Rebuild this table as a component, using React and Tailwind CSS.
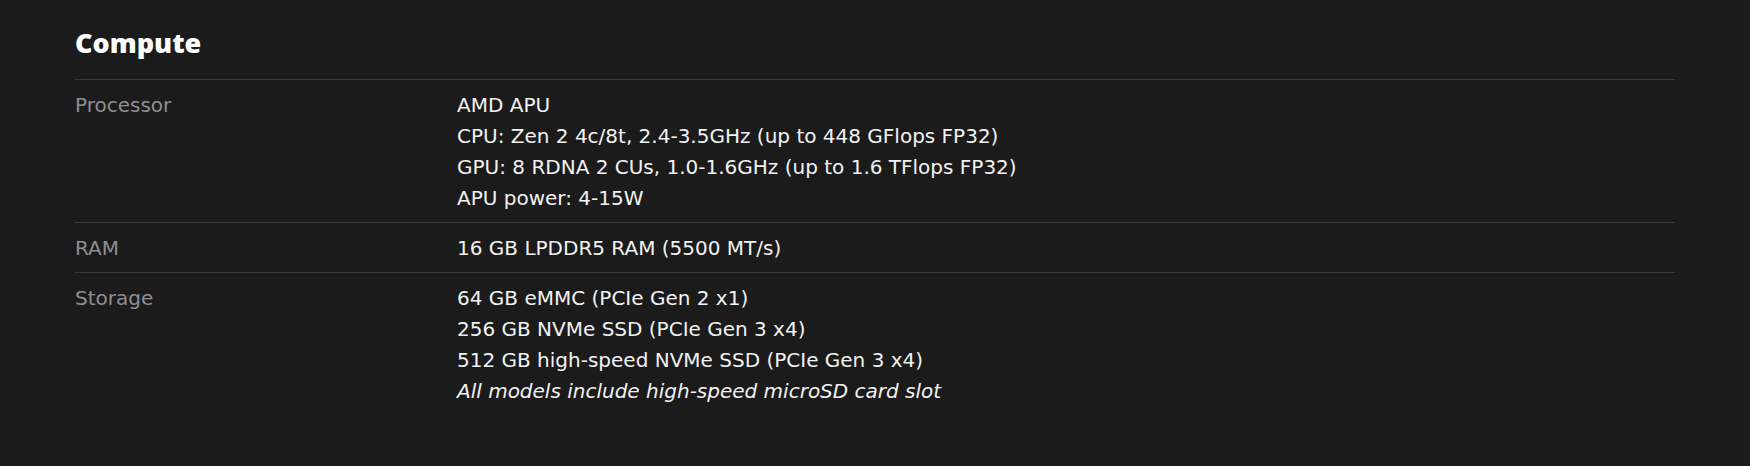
const rows = [
  {
    label: 'Processor',
    lines: [
      'AMD APU',
      'CPU: Zen 2 4c/8t, 2.4-3.5GHz (up to 448 GFlops FP32)',
      'GPU: 8 RDNA 2 CUs, 1.0-1.6GHz (up to 1.6 TFlops FP32)',
      'APU power: 4-15W',
    ],
  },
  { label: 'RAM', lines: ['16 GB LPDDR5 RAM (5500 MT/s)'] },
  {
    label: 'Storage',
    lines: [
      '64 GB eMMC (PCIe Gen 2 x1)',
      '256 GB NVMe SSD (PCIe Gen 3 x4)',
      '512 GB high-speed NVMe SSD (PCIe Gen 3 x4)',
    ],
    note: 'All models include high-speed microSD card slot',
  },
];

const SpecRow = ({ row, last }) => (
  <div className={`grid grid-cols-[382px_1fr] pt-[10px] pb-[8px] ${last ? '' : 'border-b border-[#3b3b45]'}`}>
    <div className="text-[#8e8e92]">{row.label}</div>
    <div className="text-[#f2f2f2]">
      {row.lines.map((l) => (
        <div key={l}>{l}</div>
      ))}
      {row.note && <div className="italic">{row.note}</div>}
    </div>
  </div>
);

const App = () => {
  return (
    <div className="min-h-[466px] w-full bg-[#1b1b1b]">
      <div className="max-w-[1600px] mx-auto pt-[23px]">
        <h2 className="font-['Noto_Sans',sans-serif] text-[27px] leading-[40px] font-black text-white pb-4 border-b border-[#3b3b45]">
          Compute
        </h2>
        <div className="font-['DejaVu_Sans',sans-serif] text-[20px] leading-[31px]">
          {rows.map((row, i) => (
            <SpecRow key={row.label} row={row} last={i === rows.length - 1} />
          ))}
        </div>
      </div>
    </div>
  );
};

export default App;
